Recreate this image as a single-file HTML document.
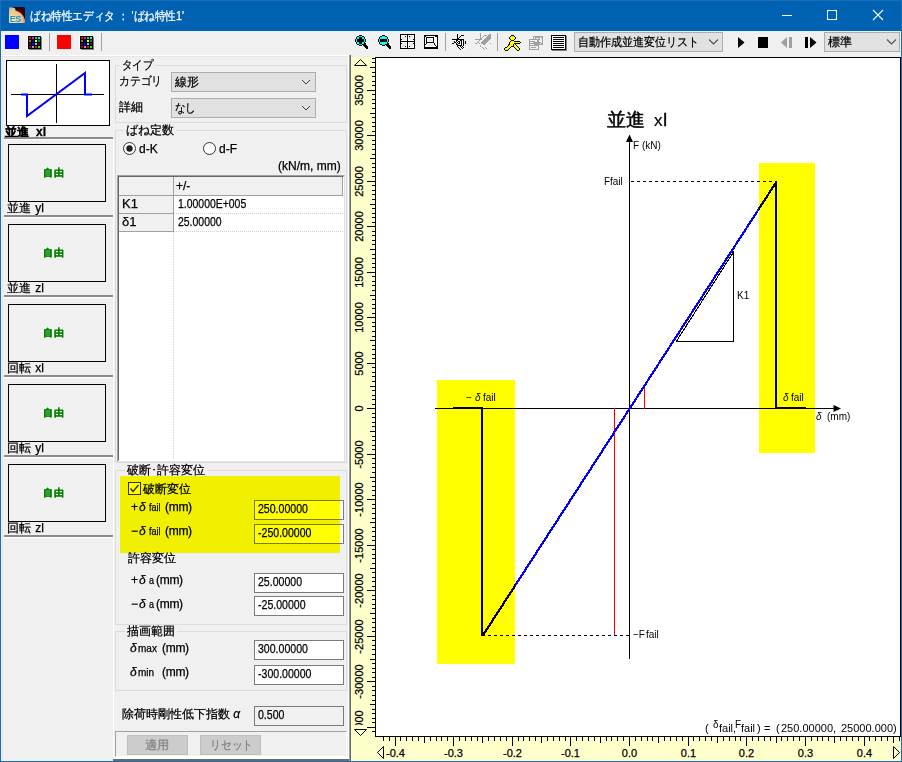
<!DOCTYPE html>
<html lang="ja"><head><meta charset="utf-8"><style>
*{box-sizing:border-box}
html,body{margin:0;padding:0;width:902px;height:762px;overflow:hidden;background:#f0f0f0;font-family:'Liberation Sans', sans-serif;font-size:12px;color:#000}
.ab{position:absolute}
.t{position:absolute;white-space:nowrap;line-height:12px;-webkit-text-stroke:0.25px currentColor}
.gb{position:absolute;border:1px solid #dcdcdc}
.gl{position:absolute;background:#f0f0f0;padding:0 2px;line-height:12px;white-space:nowrap;-webkit-text-stroke:0.25px #000}
.cb{position:absolute;background:#e1e1e1;border:1px solid #adadad}
.in{position:absolute;background:#fff;border:1px solid #7a7a7a;line-height:17px;padding-left:3px;white-space:nowrap;-webkit-text-stroke:0.25px #000}
.thumb{position:absolute;border:1px solid #000;background:#f0f0f0}
.free{position:absolute;left:0;right:0;text-align:center;color:#008000;font-weight:bold;font-size:11px;line-height:11px}
.sep{position:absolute;left:4px;width:109px;height:3px;border-top:2px solid #8a8a8a;border-bottom:1px solid #fff}
</style></head><body>

<div class="ab" style="left:0;top:0;width:902px;height:31px;background:#0062b2"></div>
<div class="ab" style="left:0;top:0;width:902px;height:1px;background:#1b6db6"></div>
<div class="ab" style="left:0;top:0;width:1px;height:762px;background:#1b6db6"></div>
<div class="ab" style="left:901px;top:0;width:1px;height:762px;background:#1b6db6"></div>
<div class="ab" style="left:0;top:761px;width:902px;height:1px;background:#1b6db6"></div>
<svg class="ab" style="left:9px;top:7px" width="16" height="16" viewBox="0 0 16 16"><defs><radialGradient id="pg" cx="0.2" cy="0.9" r="0.9"><stop offset="0" stop-color="#ffe8b8"/><stop offset="0.7" stop-color="#f0c090"/><stop offset="1" stop-color="#c07050"/></radialGradient></defs><rect x="0" y="0" width="16" height="16" rx="1" fill="url(#pg)"/><path d="M2 0 H15 Q16 0 16 1 V13 Q14 6 8 4 Q5 3 2 0 Z" fill="#3a0202"/><ellipse cx="3.5" cy="3" rx="3" ry="2.5" fill="#c8c8c8"/><ellipse cx="4" cy="5" rx="1.5" ry="1" fill="#f0f000"/><text x="0.8" y="14.8" font-family="Liberation Sans" font-size="9" font-weight="bold" fill="#1898c8" letter-spacing="-0.5">ES</text></svg>
<div class="t" style="left:30px;top:10px;color:#fff;font-size:12px;transform:scaleX(0.885);transform-origin:0 0">ばね特性エディタ ： 'ばね特性1'</div>
<div class="ab" style="left:782px;top:15px;width:10px;height:1px;background:#fff"></div>
<div class="ab" style="left:827px;top:10px;width:10px;height:10px;border:1px solid #fff"></div>
<svg class="ab" style="left:872px;top:9px" width="12" height="12"><path d="M1 1L11 11M11 1L1 11" stroke="#fff" stroke-width="1.1"/></svg>
<div class="ab" style="left:5px;top:35px;width:14px;height:14px;background:#0000ff"></div>
<div class="ab" style="left:27px;top:35px;width:15px;height:15px;background:#fafafa"></div><div class="ab" style="left:29px;top:37px;width:13px;height:13px;background:#808080"></div><div class="ab" style="left:28px;top:36px;width:13px;height:13px;background:#000"></div><div class="ab" style="left:29px;top:37px;width:2px;height:2px;background:#ff0000"></div><div class="ab" style="left:32px;top:37px;width:2px;height:2px;background:#ff00ff"></div><div class="ab" style="left:35px;top:37px;width:2px;height:2px;background:#00ff00"></div><div class="ab" style="left:38px;top:37px;width:2px;height:2px;background:#00ffff"></div><div class="ab" style="left:29px;top:40px;width:2px;height:2px;background:#808000"></div><div class="ab" style="left:32px;top:40px;width:2px;height:2px;background:#000080"></div><div class="ab" style="left:35px;top:40px;width:2px;height:2px;background:#ffff00"></div><div class="ab" style="left:38px;top:40px;width:2px;height:2px;background:#008080"></div><div class="ab" style="left:29px;top:43px;width:2px;height:2px;background:#800000"></div><div class="ab" style="left:32px;top:43px;width:2px;height:2px;background:#0000ff"></div><div class="ab" style="left:35px;top:43px;width:2px;height:2px;background:#00ffff"></div><div class="ab" style="left:38px;top:43px;width:2px;height:2px;background:#800000"></div><div class="ab" style="left:29px;top:46px;width:2px;height:2px;background:#800080"></div><div class="ab" style="left:32px;top:46px;width:2px;height:2px;background:#a4a4a4"></div><div class="ab" style="left:35px;top:46px;width:2px;height:2px;background:#ff0000"></div><div class="ab" style="left:38px;top:46px;width:2px;height:2px;background:#00ff00"></div>
<div class="ab" style="left:49px;top:33px;width:1px;height:18px;background:#a0a0a0"></div>
<div class="ab" style="left:57px;top:35px;width:14px;height:14px;background:#ff0000"></div>
<div class="ab" style="left:79px;top:35px;width:15px;height:15px;background:#fafafa"></div><div class="ab" style="left:81px;top:37px;width:13px;height:13px;background:#808080"></div><div class="ab" style="left:80px;top:36px;width:13px;height:13px;background:#000"></div><div class="ab" style="left:81px;top:37px;width:2px;height:2px;background:#ff0000"></div><div class="ab" style="left:84px;top:37px;width:2px;height:2px;background:#ff00ff"></div><div class="ab" style="left:87px;top:37px;width:2px;height:2px;background:#00ff00"></div><div class="ab" style="left:90px;top:37px;width:2px;height:2px;background:#00ffff"></div><div class="ab" style="left:81px;top:40px;width:2px;height:2px;background:#808000"></div><div class="ab" style="left:84px;top:40px;width:2px;height:2px;background:#000080"></div><div class="ab" style="left:87px;top:40px;width:2px;height:2px;background:#ffff00"></div><div class="ab" style="left:90px;top:40px;width:2px;height:2px;background:#008080"></div><div class="ab" style="left:81px;top:43px;width:2px;height:2px;background:#800000"></div><div class="ab" style="left:84px;top:43px;width:2px;height:2px;background:#0000ff"></div><div class="ab" style="left:87px;top:43px;width:2px;height:2px;background:#00ffff"></div><div class="ab" style="left:90px;top:43px;width:2px;height:2px;background:#800000"></div><div class="ab" style="left:81px;top:46px;width:2px;height:2px;background:#800080"></div><div class="ab" style="left:84px;top:46px;width:2px;height:2px;background:#a4a4a4"></div><div class="ab" style="left:87px;top:46px;width:2px;height:2px;background:#ff0000"></div><div class="ab" style="left:90px;top:46px;width:2px;height:2px;background:#00ff00"></div>
<div class="ab" style="left:101px;top:33px;width:1px;height:18px;background:#a0a0a0"></div>
<svg class="ab" style="left:350px;top:31px" width="551" height="24" viewBox="350 31 551 24"><g shape-rendering="crispEdges"><rect x="358" y="34" width="5" height="1" fill="#ffffff"/><rect x="357" y="35" width="2" height="1" fill="#ffffff"/><rect x="359" y="35" width="3" height="1" fill="#000"/><rect x="362" y="35" width="2" height="1" fill="#ffffff"/><rect x="356" y="36" width="1" height="1" fill="#ffffff"/><rect x="357" y="36" width="2" height="1" fill="#000"/><rect x="359" y="36" width="3" height="1" fill="#00ffff"/><rect x="362" y="36" width="2" height="1" fill="#000"/><rect x="364" y="36" width="1" height="1" fill="#ffffff"/><rect x="355" y="37" width="1" height="1" fill="#ffffff"/><rect x="356" y="37" width="1" height="1" fill="#000"/><rect x="357" y="37" width="2" height="1" fill="#00ffff"/><rect x="359" y="37" width="3" height="1" fill="#000"/><rect x="362" y="37" width="2" height="1" fill="#00ffff"/><rect x="364" y="37" width="1" height="1" fill="#000"/><rect x="365" y="37" width="1" height="1" fill="#ffffff"/><rect x="355" y="38" width="1" height="1" fill="#ffffff"/><rect x="356" y="38" width="1" height="1" fill="#000"/><rect x="357" y="38" width="2" height="1" fill="#00ffff"/><rect x="359" y="38" width="3" height="1" fill="#000"/><rect x="362" y="38" width="2" height="1" fill="#00ffff"/><rect x="364" y="38" width="1" height="1" fill="#000"/><rect x="365" y="38" width="1" height="1" fill="#ffffff"/><rect x="355" y="39" width="1" height="1" fill="#000"/><rect x="356" y="39" width="1" height="1" fill="#00ffff"/><rect x="357" y="39" width="7" height="1" fill="#000"/><rect x="364" y="39" width="1" height="1" fill="#00ffff"/><rect x="365" y="39" width="1" height="1" fill="#000"/><rect x="366" y="39" width="1" height="1" fill="#ffffff"/><rect x="355" y="40" width="1" height="1" fill="#000"/><rect x="356" y="40" width="1" height="1" fill="#00ffff"/><rect x="357" y="40" width="7" height="1" fill="#000"/><rect x="364" y="40" width="1" height="1" fill="#00ffff"/><rect x="365" y="40" width="1" height="1" fill="#000"/><rect x="366" y="40" width="1" height="1" fill="#ffffff"/><rect x="355" y="41" width="1" height="1" fill="#000"/><rect x="356" y="41" width="1" height="1" fill="#00ffff"/><rect x="357" y="41" width="7" height="1" fill="#000"/><rect x="364" y="41" width="1" height="1" fill="#00ffff"/><rect x="365" y="41" width="1" height="1" fill="#000"/><rect x="366" y="41" width="1" height="1" fill="#ffffff"/><rect x="355" y="42" width="1" height="1" fill="#ffffff"/><rect x="356" y="42" width="1" height="1" fill="#000"/><rect x="357" y="42" width="2" height="1" fill="#00ffff"/><rect x="359" y="42" width="3" height="1" fill="#000"/><rect x="362" y="42" width="2" height="1" fill="#00ffff"/><rect x="364" y="42" width="1" height="1" fill="#000"/><rect x="365" y="42" width="1" height="1" fill="#ffffff"/><rect x="355" y="43" width="1" height="1" fill="#ffffff"/><rect x="356" y="43" width="1" height="1" fill="#000"/><rect x="357" y="43" width="2" height="1" fill="#00ffff"/><rect x="359" y="43" width="3" height="1" fill="#000"/><rect x="362" y="43" width="2" height="1" fill="#00ffff"/><rect x="364" y="43" width="2" height="1" fill="#000"/><rect x="366" y="43" width="1" height="1" fill="#ffffff"/><rect x="356" y="44" width="1" height="1" fill="#ffffff"/><rect x="357" y="44" width="2" height="1" fill="#000"/><rect x="359" y="44" width="3" height="1" fill="#00ffff"/><rect x="362" y="44" width="4" height="1" fill="#000"/><rect x="366" y="44" width="1" height="1" fill="#ffffff"/><rect x="357" y="45" width="2" height="1" fill="#ffffff"/><rect x="359" y="45" width="3" height="1" fill="#000"/><rect x="362" y="45" width="1" height="1" fill="#ffffff"/><rect x="363" y="45" width="4" height="1" fill="#000"/><rect x="367" y="45" width="1" height="1" fill="#ffffff"/><rect x="359" y="46" width="3" height="1" fill="#ffffff"/><rect x="363" y="46" width="1" height="1" fill="#ffffff"/><rect x="364" y="46" width="4" height="1" fill="#000"/><rect x="364" y="47" width="1" height="1" fill="#ffffff"/><rect x="365" y="47" width="3" height="1" fill="#000"/><rect x="365" y="48" width="1" height="1" fill="#ffffff"/><rect x="366" y="48" width="2" height="1" fill="#000"/><rect x="381" y="34" width="5" height="1" fill="#ffffff"/><rect x="380" y="35" width="2" height="1" fill="#ffffff"/><rect x="382" y="35" width="3" height="1" fill="#000"/><rect x="385" y="35" width="2" height="1" fill="#ffffff"/><rect x="379" y="36" width="1" height="1" fill="#ffffff"/><rect x="380" y="36" width="2" height="1" fill="#000"/><rect x="382" y="36" width="3" height="1" fill="#00ffff"/><rect x="385" y="36" width="2" height="1" fill="#000"/><rect x="387" y="36" width="1" height="1" fill="#ffffff"/><rect x="378" y="37" width="1" height="1" fill="#ffffff"/><rect x="379" y="37" width="1" height="1" fill="#000"/><rect x="380" y="37" width="7" height="1" fill="#00ffff"/><rect x="387" y="37" width="1" height="1" fill="#000"/><rect x="388" y="37" width="1" height="1" fill="#ffffff"/><rect x="378" y="38" width="1" height="1" fill="#ffffff"/><rect x="379" y="38" width="1" height="1" fill="#000"/><rect x="380" y="38" width="7" height="1" fill="#00ffff"/><rect x="387" y="38" width="1" height="1" fill="#000"/><rect x="388" y="38" width="1" height="1" fill="#ffffff"/><rect x="378" y="39" width="1" height="1" fill="#000"/><rect x="379" y="39" width="1" height="1" fill="#00ffff"/><rect x="380" y="39" width="7" height="1" fill="#000"/><rect x="387" y="39" width="1" height="1" fill="#00ffff"/><rect x="388" y="39" width="1" height="1" fill="#000"/><rect x="389" y="39" width="1" height="1" fill="#ffffff"/><rect x="378" y="40" width="1" height="1" fill="#000"/><rect x="379" y="40" width="1" height="1" fill="#00ffff"/><rect x="380" y="40" width="7" height="1" fill="#000"/><rect x="387" y="40" width="1" height="1" fill="#00ffff"/><rect x="388" y="40" width="1" height="1" fill="#000"/><rect x="389" y="40" width="1" height="1" fill="#ffffff"/><rect x="378" y="41" width="1" height="1" fill="#000"/><rect x="379" y="41" width="1" height="1" fill="#00ffff"/><rect x="380" y="41" width="7" height="1" fill="#000"/><rect x="387" y="41" width="1" height="1" fill="#00ffff"/><rect x="388" y="41" width="1" height="1" fill="#000"/><rect x="389" y="41" width="1" height="1" fill="#ffffff"/><rect x="378" y="42" width="1" height="1" fill="#ffffff"/><rect x="379" y="42" width="1" height="1" fill="#000"/><rect x="380" y="42" width="7" height="1" fill="#00ffff"/><rect x="387" y="42" width="1" height="1" fill="#000"/><rect x="388" y="42" width="1" height="1" fill="#ffffff"/><rect x="378" y="43" width="1" height="1" fill="#ffffff"/><rect x="379" y="43" width="1" height="1" fill="#000"/><rect x="380" y="43" width="7" height="1" fill="#00ffff"/><rect x="387" y="43" width="2" height="1" fill="#000"/><rect x="389" y="43" width="1" height="1" fill="#ffffff"/><rect x="379" y="44" width="1" height="1" fill="#ffffff"/><rect x="380" y="44" width="2" height="1" fill="#000"/><rect x="382" y="44" width="3" height="1" fill="#00ffff"/><rect x="385" y="44" width="4" height="1" fill="#000"/><rect x="389" y="44" width="1" height="1" fill="#ffffff"/><rect x="380" y="45" width="2" height="1" fill="#ffffff"/><rect x="382" y="45" width="3" height="1" fill="#000"/><rect x="385" y="45" width="1" height="1" fill="#ffffff"/><rect x="386" y="45" width="4" height="1" fill="#000"/><rect x="390" y="45" width="1" height="1" fill="#ffffff"/><rect x="382" y="46" width="3" height="1" fill="#ffffff"/><rect x="386" y="46" width="1" height="1" fill="#ffffff"/><rect x="387" y="46" width="4" height="1" fill="#000"/><rect x="387" y="47" width="1" height="1" fill="#ffffff"/><rect x="388" y="47" width="3" height="1" fill="#000"/><rect x="388" y="48" width="1" height="1" fill="#ffffff"/><rect x="389" y="48" width="2" height="1" fill="#000"/><rect x="400" y="34" width="15" height="1" fill="#000"/><rect x="400" y="35" width="1" height="1" fill="#000"/><rect x="401" y="35" width="6" height="1" fill="#ffffff"/><rect x="407" y="35" width="1" height="1" fill="#000"/><rect x="408" y="35" width="6" height="1" fill="#ffffff"/><rect x="414" y="35" width="1" height="1" fill="#000"/><rect x="400" y="36" width="1" height="1" fill="#000"/><rect x="401" y="36" width="1" height="1" fill="#ffffff"/><rect x="402" y="36" width="3" height="1" fill="#e8e8e8"/><rect x="405" y="36" width="1" height="1" fill="#000"/><rect x="406" y="36" width="1" height="1" fill="#ffffff"/><rect x="407" y="36" width="1" height="1" fill="#000"/><rect x="408" y="36" width="1" height="1" fill="#ffffff"/><rect x="409" y="36" width="1" height="1" fill="#000"/><rect x="410" y="36" width="3" height="1" fill="#e8e8e8"/><rect x="413" y="36" width="1" height="1" fill="#ffffff"/><rect x="414" y="36" width="1" height="1" fill="#000"/><rect x="400" y="37" width="1" height="1" fill="#000"/><rect x="401" y="37" width="1" height="1" fill="#ffffff"/><rect x="402" y="37" width="4" height="1" fill="#e8e8e8"/><rect x="406" y="37" width="1" height="1" fill="#ffffff"/><rect x="407" y="37" width="1" height="1" fill="#000"/><rect x="408" y="37" width="1" height="1" fill="#ffffff"/><rect x="409" y="37" width="4" height="1" fill="#e8e8e8"/><rect x="413" y="37" width="1" height="1" fill="#ffffff"/><rect x="414" y="37" width="1" height="1" fill="#000"/><rect x="400" y="38" width="1" height="1" fill="#000"/><rect x="401" y="38" width="1" height="1" fill="#ffffff"/><rect x="402" y="38" width="4" height="1" fill="#e8e8e8"/><rect x="406" y="38" width="1" height="1" fill="#ffffff"/><rect x="407" y="38" width="1" height="1" fill="#000"/><rect x="408" y="38" width="1" height="1" fill="#ffffff"/><rect x="409" y="38" width="4" height="1" fill="#e8e8e8"/><rect x="413" y="38" width="1" height="1" fill="#ffffff"/><rect x="414" y="38" width="1" height="1" fill="#000"/><rect x="400" y="39" width="2" height="1" fill="#000"/><rect x="402" y="39" width="4" height="1" fill="#e8e8e8"/><rect x="406" y="39" width="1" height="1" fill="#ffffff"/><rect x="407" y="39" width="1" height="1" fill="#000"/><rect x="408" y="39" width="1" height="1" fill="#ffffff"/><rect x="409" y="39" width="4" height="1" fill="#e8e8e8"/><rect x="413" y="39" width="2" height="1" fill="#000"/><rect x="400" y="40" width="1" height="1" fill="#000"/><rect x="401" y="40" width="6" height="1" fill="#ffffff"/><rect x="407" y="40" width="1" height="1" fill="#000"/><rect x="408" y="40" width="6" height="1" fill="#ffffff"/><rect x="414" y="40" width="1" height="1" fill="#000"/><rect x="400" y="41" width="15" height="1" fill="#000"/><rect x="400" y="42" width="1" height="1" fill="#000"/><rect x="401" y="42" width="6" height="1" fill="#ffffff"/><rect x="407" y="42" width="1" height="1" fill="#000"/><rect x="408" y="42" width="6" height="1" fill="#ffffff"/><rect x="414" y="42" width="1" height="1" fill="#000"/><rect x="400" y="43" width="2" height="1" fill="#000"/><rect x="402" y="43" width="4" height="1" fill="#e8e8e8"/><rect x="406" y="43" width="1" height="1" fill="#ffffff"/><rect x="407" y="43" width="1" height="1" fill="#000"/><rect x="408" y="43" width="1" height="1" fill="#ffffff"/><rect x="409" y="43" width="4" height="1" fill="#e8e8e8"/><rect x="413" y="43" width="2" height="1" fill="#000"/><rect x="400" y="44" width="1" height="1" fill="#000"/><rect x="401" y="44" width="1" height="1" fill="#ffffff"/><rect x="402" y="44" width="4" height="1" fill="#e8e8e8"/><rect x="406" y="44" width="1" height="1" fill="#ffffff"/><rect x="407" y="44" width="1" height="1" fill="#000"/><rect x="408" y="44" width="1" height="1" fill="#ffffff"/><rect x="409" y="44" width="4" height="1" fill="#e8e8e8"/><rect x="413" y="44" width="1" height="1" fill="#ffffff"/><rect x="414" y="44" width="1" height="1" fill="#000"/><rect x="400" y="45" width="1" height="1" fill="#000"/><rect x="401" y="45" width="1" height="1" fill="#ffffff"/><rect x="402" y="45" width="4" height="1" fill="#e8e8e8"/><rect x="406" y="45" width="1" height="1" fill="#ffffff"/><rect x="407" y="45" width="1" height="1" fill="#000"/><rect x="408" y="45" width="1" height="1" fill="#ffffff"/><rect x="409" y="45" width="4" height="1" fill="#e8e8e8"/><rect x="413" y="45" width="1" height="1" fill="#ffffff"/><rect x="414" y="45" width="1" height="1" fill="#000"/><rect x="400" y="46" width="1" height="1" fill="#000"/><rect x="401" y="46" width="1" height="1" fill="#ffffff"/><rect x="402" y="46" width="3" height="1" fill="#e8e8e8"/><rect x="405" y="46" width="1" height="1" fill="#000"/><rect x="406" y="46" width="1" height="1" fill="#ffffff"/><rect x="407" y="46" width="1" height="1" fill="#000"/><rect x="408" y="46" width="1" height="1" fill="#ffffff"/><rect x="409" y="46" width="1" height="1" fill="#000"/><rect x="410" y="46" width="3" height="1" fill="#e8e8e8"/><rect x="413" y="46" width="1" height="1" fill="#ffffff"/><rect x="414" y="46" width="1" height="1" fill="#000"/><rect x="400" y="47" width="1" height="1" fill="#000"/><rect x="401" y="47" width="6" height="1" fill="#ffffff"/><rect x="407" y="47" width="1" height="1" fill="#000"/><rect x="408" y="47" width="6" height="1" fill="#ffffff"/><rect x="414" y="47" width="1" height="1" fill="#000"/><rect x="400" y="48" width="15" height="1" fill="#000"/><rect x="424" y="35" width="14" height="1" fill="#000"/><rect x="424" y="36" width="2" height="1" fill="#000"/><rect x="426" y="36" width="9" height="1" fill="#ffffff"/><rect x="435" y="36" width="3" height="1" fill="#000"/><rect x="424" y="37" width="1" height="1" fill="#000"/><rect x="425" y="37" width="1" height="1" fill="#ffffff"/><rect x="426" y="37" width="8" height="1" fill="#000"/><rect x="434" y="37" width="3" height="1" fill="#ffffff"/><rect x="437" y="37" width="1" height="1" fill="#000"/><rect x="424" y="38" width="1" height="1" fill="#000"/><rect x="425" y="38" width="1" height="1" fill="#ffffff"/><rect x="426" y="38" width="1" height="1" fill="#000"/><rect x="427" y="38" width="6" height="1" fill="#ffffff"/><rect x="433" y="38" width="1" height="1" fill="#000"/><rect x="434" y="38" width="3" height="1" fill="#ffffff"/><rect x="437" y="38" width="1" height="1" fill="#000"/><rect x="424" y="39" width="1" height="1" fill="#000"/><rect x="425" y="39" width="1" height="1" fill="#ffffff"/><rect x="426" y="39" width="1" height="1" fill="#000"/><rect x="427" y="39" width="1" height="1" fill="#ffffff"/><rect x="428" y="39" width="4" height="1" fill="#e8e8e8"/><rect x="432" y="39" width="1" height="1" fill="#ffffff"/><rect x="433" y="39" width="1" height="1" fill="#000"/><rect x="434" y="39" width="3" height="1" fill="#ffffff"/><rect x="437" y="39" width="1" height="1" fill="#000"/><rect x="424" y="40" width="1" height="1" fill="#000"/><rect x="425" y="40" width="1" height="1" fill="#ffffff"/><rect x="426" y="40" width="1" height="1" fill="#000"/><rect x="427" y="40" width="1" height="1" fill="#ffffff"/><rect x="428" y="40" width="4" height="1" fill="#e8e8e8"/><rect x="432" y="40" width="1" height="1" fill="#ffffff"/><rect x="433" y="40" width="1" height="1" fill="#000"/><rect x="434" y="40" width="3" height="1" fill="#ffffff"/><rect x="437" y="40" width="1" height="1" fill="#000"/><rect x="424" y="41" width="1" height="1" fill="#000"/><rect x="425" y="41" width="1" height="1" fill="#ffffff"/><rect x="426" y="41" width="1" height="1" fill="#000"/><rect x="427" y="41" width="6" height="1" fill="#ffffff"/><rect x="433" y="41" width="1" height="1" fill="#000"/><rect x="434" y="41" width="3" height="1" fill="#ffffff"/><rect x="437" y="41" width="1" height="1" fill="#000"/><rect x="424" y="42" width="1" height="1" fill="#000"/><rect x="425" y="42" width="1" height="1" fill="#ffffff"/><rect x="426" y="42" width="8" height="1" fill="#000"/><rect x="434" y="42" width="3" height="1" fill="#ffffff"/><rect x="437" y="42" width="1" height="1" fill="#000"/><rect x="424" y="43" width="1" height="1" fill="#000"/><rect x="425" y="43" width="1" height="1" fill="#ffffff"/><rect x="426" y="43" width="1" height="1" fill="#000"/><rect x="427" y="43" width="7" height="1" fill="#ffffff"/><rect x="434" y="43" width="1" height="1" fill="#000"/><rect x="435" y="43" width="2" height="1" fill="#ffffff"/><rect x="437" y="43" width="1" height="1" fill="#000"/><rect x="424" y="44" width="2" height="1" fill="#000"/><rect x="426" y="44" width="1" height="1" fill="#ffffff"/><rect x="427" y="44" width="6" height="1" fill="#e8e8e8"/><rect x="433" y="44" width="1" height="1" fill="#ffffff"/><rect x="434" y="44" width="1" height="1" fill="#000"/><rect x="435" y="44" width="2" height="1" fill="#ffffff"/><rect x="437" y="44" width="1" height="1" fill="#000"/><rect x="424" y="45" width="1" height="1" fill="#000"/><rect x="425" y="45" width="2" height="1" fill="#ffffff"/><rect x="427" y="45" width="6" height="1" fill="#e8e8e8"/><rect x="433" y="45" width="2" height="1" fill="#ffffff"/><rect x="435" y="45" width="1" height="1" fill="#000"/><rect x="436" y="45" width="1" height="1" fill="#ffffff"/><rect x="437" y="45" width="1" height="1" fill="#000"/><rect x="424" y="46" width="1" height="1" fill="#000"/><rect x="425" y="46" width="11" height="1" fill="#ffffff"/><rect x="436" y="46" width="2" height="1" fill="#000"/><rect x="424" y="47" width="14" height="1" fill="#000"/><rect x="424" y="48" width="14" height="1" fill="#000"/><rect x="457" y="33" width="1" height="1" fill="#ffffff"/><rect x="457" y="34" width="1" height="1" fill="#000"/><rect x="457" y="35" width="1" height="1" fill="#000"/><rect x="461" y="35" width="3" height="1" fill="#000"/><rect x="457" y="36" width="1" height="1" fill="#000"/><rect x="460" y="36" width="1" height="1" fill="#000"/><rect x="457" y="37" width="1" height="1" fill="#000"/><rect x="459" y="37" width="1" height="1" fill="#000"/><rect x="457" y="38" width="2" height="1" fill="#000"/><rect x="452" y="39" width="12" height="1" fill="#000"/><rect x="456" y="40" width="2" height="1" fill="#000"/><rect x="460" y="40" width="2" height="1" fill="#000"/><rect x="462" y="40" width="1" height="1" fill="#e8e8e8"/><rect x="463" y="40" width="1" height="1" fill="#000"/><rect x="464" y="40" width="1" height="1" fill="#e8e8e8"/><rect x="454" y="41" width="1" height="1" fill="#000"/><rect x="456" y="41" width="1" height="1" fill="#000"/><rect x="458" y="41" width="2" height="1" fill="#000"/><rect x="460" y="41" width="1" height="1" fill="#e8e8e8"/><rect x="461" y="41" width="1" height="1" fill="#000"/><rect x="462" y="41" width="1" height="1" fill="#e8e8e8"/><rect x="463" y="41" width="1" height="1" fill="#000"/><rect x="464" y="41" width="1" height="1" fill="#e8e8e8"/><rect x="465" y="41" width="1" height="1" fill="#000"/><rect x="454" y="42" width="2" height="1" fill="#000"/><rect x="457" y="42" width="1" height="1" fill="#000"/><rect x="458" y="42" width="1" height="1" fill="#e8e8e8"/><rect x="459" y="42" width="1" height="1" fill="#000"/><rect x="460" y="42" width="1" height="1" fill="#e8e8e8"/><rect x="461" y="42" width="1" height="1" fill="#000"/><rect x="462" y="42" width="1" height="1" fill="#e8e8e8"/><rect x="463" y="42" width="1" height="1" fill="#000"/><rect x="464" y="42" width="1" height="1" fill="#e8e8e8"/><rect x="465" y="42" width="1" height="1" fill="#000"/><rect x="466" y="42" width="1" height="1" fill="#e8e8e8"/><rect x="452" y="43" width="2" height="1" fill="#000"/><rect x="456" y="43" width="1" height="1" fill="#000"/><rect x="458" y="43" width="2" height="1" fill="#000"/><rect x="460" y="43" width="1" height="1" fill="#e8e8e8"/><rect x="461" y="43" width="1" height="1" fill="#000"/><rect x="462" y="43" width="1" height="1" fill="#e8e8e8"/><rect x="463" y="43" width="1" height="1" fill="#000"/><rect x="464" y="43" width="1" height="1" fill="#e8e8e8"/><rect x="465" y="43" width="1" height="1" fill="#000"/><rect x="456" y="44" width="2" height="1" fill="#000"/><rect x="460" y="44" width="1" height="1" fill="#e8e8e8"/><rect x="461" y="44" width="1" height="1" fill="#000"/><rect x="462" y="44" width="1" height="1" fill="#e8e8e8"/><rect x="463" y="44" width="1" height="1" fill="#000"/><rect x="464" y="44" width="1" height="1" fill="#e8e8e8"/><rect x="457" y="45" width="5" height="1" fill="#000"/><rect x="462" y="45" width="1" height="1" fill="#e8e8e8"/><rect x="463" y="45" width="1" height="1" fill="#000"/><rect x="457" y="46" width="1" height="1" fill="#000"/><rect x="460" y="46" width="1" height="1" fill="#000"/><rect x="462" y="46" width="1" height="1" fill="#000"/><rect x="458" y="47" width="1" height="1" fill="#000"/><rect x="461" y="47" width="1" height="1" fill="#000"/><rect x="463" y="47" width="1" height="1" fill="#000"/><rect x="459" y="48" width="1" height="1" fill="#000"/><rect x="462" y="48" width="1" height="1" fill="#000"/><rect x="463" y="48" width="2" height="1" fill="#ffffff"/><rect x="460" y="49" width="1" height="1" fill="#000"/><rect x="463" y="49" width="2" height="1" fill="#ffffff"/><rect x="480" y="33" width="1" height="1" fill="#a0a0a0"/><rect x="480" y="34" width="1" height="1" fill="#a0a0a0"/><rect x="489" y="34" width="2" height="1" fill="#a0a0a0"/><rect x="480" y="35" width="1" height="1" fill="#a0a0a0"/><rect x="484" y="35" width="3" height="1" fill="#a0a0a0"/><rect x="488" y="35" width="3" height="1" fill="#a0a0a0"/><rect x="480" y="36" width="1" height="1" fill="#a0a0a0"/><rect x="483" y="36" width="1" height="1" fill="#a0a0a0"/><rect x="487" y="36" width="4" height="1" fill="#a0a0a0"/><rect x="480" y="37" width="1" height="1" fill="#a0a0a0"/><rect x="482" y="37" width="1" height="1" fill="#a0a0a0"/><rect x="486" y="37" width="5" height="1" fill="#a0a0a0"/><rect x="480" y="38" width="2" height="1" fill="#a0a0a0"/><rect x="485" y="38" width="6" height="1" fill="#a0a0a0"/><rect x="475" y="39" width="7" height="1" fill="#a0a0a0"/><rect x="484" y="39" width="6" height="1" fill="#a0a0a0"/><rect x="479" y="40" width="1" height="1" fill="#a0a0a0"/><rect x="483" y="40" width="6" height="1" fill="#a0a0a0"/><rect x="478" y="41" width="1" height="1" fill="#a0a0a0"/><rect x="482" y="41" width="6" height="1" fill="#a0a0a0"/><rect x="477" y="42" width="2" height="1" fill="#a0a0a0"/><rect x="481" y="42" width="6" height="1" fill="#a0a0a0"/><rect x="475" y="43" width="2" height="1" fill="#a0a0a0"/><rect x="479" y="43" width="1" height="1" fill="#a0a0a0"/><rect x="481" y="43" width="5" height="1" fill="#a0a0a0"/><rect x="490" y="43" width="1" height="1" fill="#a0a0a0"/><rect x="483" y="44" width="2" height="1" fill="#a0a0a0"/><rect x="480" y="45" width="1" height="1" fill="#a0a0a0"/><rect x="480" y="46" width="1" height="1" fill="#a0a0a0"/><rect x="482" y="47" width="1" height="1" fill="#a0a0a0"/><rect x="485" y="47" width="1" height="1" fill="#a0a0a0"/><rect x="483" y="48" width="1" height="1" fill="#a0a0a0"/><rect x="486" y="48" width="1" height="1" fill="#a0a0a0"/><rect x="484" y="49" width="1" height="1" fill="#a0a0a0"/><rect x="511" y="35" width="3" height="1" fill="#000"/><rect x="510" y="36" width="1" height="1" fill="#000"/><rect x="511" y="36" width="3" height="1" fill="#ffff00"/><rect x="514" y="36" width="1" height="1" fill="#000"/><rect x="509" y="37" width="1" height="1" fill="#000"/><rect x="510" y="37" width="5" height="1" fill="#ffff00"/><rect x="515" y="37" width="1" height="1" fill="#000"/><rect x="509" y="38" width="1" height="1" fill="#000"/><rect x="510" y="38" width="5" height="1" fill="#ffff00"/><rect x="515" y="38" width="1" height="1" fill="#000"/><rect x="510" y="39" width="1" height="1" fill="#000"/><rect x="511" y="39" width="3" height="1" fill="#ffff00"/><rect x="514" y="39" width="1" height="1" fill="#000"/><rect x="511" y="40" width="3" height="1" fill="#000"/><rect x="510" y="41" width="1" height="1" fill="#000"/><rect x="511" y="41" width="3" height="1" fill="#ffff00"/><rect x="514" y="41" width="6" height="1" fill="#000"/><rect x="509" y="42" width="1" height="1" fill="#000"/><rect x="510" y="42" width="10" height="1" fill="#ffff00"/><rect x="520" y="42" width="1" height="1" fill="#000"/><rect x="509" y="43" width="1" height="1" fill="#000"/><rect x="510" y="43" width="4" height="1" fill="#ffff00"/><rect x="514" y="43" width="6" height="1" fill="#000"/><rect x="508" y="44" width="1" height="1" fill="#c00000"/><rect x="509" y="44" width="1" height="1" fill="#000"/><rect x="510" y="44" width="3" height="1" fill="#ffff00"/><rect x="513" y="44" width="1" height="1" fill="#000"/><rect x="514" y="44" width="1" height="1" fill="#ffff00"/><rect x="515" y="44" width="1" height="1" fill="#000"/><rect x="508" y="45" width="1" height="1" fill="#000"/><rect x="509" y="45" width="4" height="1" fill="#ffff00"/><rect x="513" y="45" width="1" height="1" fill="#000"/><rect x="514" y="45" width="2" height="1" fill="#ffff00"/><rect x="516" y="45" width="1" height="1" fill="#000"/><rect x="507" y="46" width="1" height="1" fill="#000"/><rect x="508" y="46" width="3" height="1" fill="#ffff00"/><rect x="511" y="46" width="3" height="1" fill="#000"/><rect x="514" y="46" width="3" height="1" fill="#ffff00"/><rect x="517" y="46" width="1" height="1" fill="#000"/><rect x="505" y="47" width="2" height="1" fill="#000"/><rect x="507" y="47" width="3" height="1" fill="#ffff00"/><rect x="510" y="47" width="1" height="1" fill="#000"/><rect x="514" y="47" width="1" height="1" fill="#000"/><rect x="515" y="47" width="3" height="1" fill="#ffff00"/><rect x="518" y="47" width="1" height="1" fill="#000"/><rect x="504" y="48" width="1" height="1" fill="#000"/><rect x="505" y="48" width="4" height="1" fill="#ffff00"/><rect x="509" y="48" width="1" height="1" fill="#000"/><rect x="515" y="48" width="1" height="1" fill="#000"/><rect x="516" y="48" width="3" height="1" fill="#ffff00"/><rect x="519" y="48" width="1" height="1" fill="#000"/><rect x="504" y="49" width="1" height="1" fill="#000"/><rect x="505" y="49" width="3" height="1" fill="#ffff00"/><rect x="508" y="49" width="1" height="1" fill="#000"/><rect x="516" y="49" width="1" height="1" fill="#000"/><rect x="517" y="49" width="2" height="1" fill="#ffff00"/><rect x="519" y="49" width="1" height="1" fill="#000"/><rect x="505" y="50" width="3" height="1" fill="#000"/><rect x="517" y="50" width="2" height="1" fill="#000"/><rect x="533" y="36" width="10" height="1" fill="#a0a0a0"/><rect x="533" y="37" width="1" height="1" fill="#a0a0a0"/><rect x="535" y="37" width="5" height="1" fill="#a0a0a0"/><rect x="541" y="37" width="2" height="1" fill="#a0a0a0"/><rect x="533" y="38" width="1" height="1" fill="#a0a0a0"/><rect x="535" y="38" width="1" height="1" fill="#a0a0a0"/><rect x="539" y="38" width="1" height="1" fill="#a0a0a0"/><rect x="542" y="38" width="1" height="1" fill="#a0a0a0"/><rect x="529" y="39" width="11" height="1" fill="#a0a0a0"/><rect x="542" y="39" width="1" height="1" fill="#a0a0a0"/><rect x="529" y="40" width="1" height="1" fill="#a0a0a0"/><rect x="537" y="40" width="2" height="1" fill="#a0a0a0"/><rect x="542" y="40" width="1" height="1" fill="#a0a0a0"/><rect x="529" y="41" width="6" height="1" fill="#a0a0a0"/><rect x="537" y="41" width="2" height="1" fill="#a0a0a0"/><rect x="542" y="41" width="1" height="1" fill="#a0a0a0"/><rect x="529" y="42" width="1" height="1" fill="#a0a0a0"/><rect x="533" y="42" width="8" height="1" fill="#a0a0a0"/><rect x="542" y="42" width="1" height="1" fill="#a0a0a0"/><rect x="529" y="43" width="11" height="1" fill="#a0a0a0"/><rect x="541" y="43" width="2" height="1" fill="#a0a0a0"/><rect x="529" y="44" width="1" height="1" fill="#a0a0a0"/><rect x="534" y="44" width="9" height="1" fill="#a0a0a0"/><rect x="529" y="45" width="10" height="1" fill="#a0a0a0"/><rect x="529" y="46" width="1" height="1" fill="#a0a0a0"/><rect x="538" y="46" width="1" height="1" fill="#a0a0a0"/><rect x="529" y="47" width="1" height="1" fill="#a0a0a0"/><rect x="531" y="47" width="5" height="1" fill="#a0a0a0"/><rect x="538" y="47" width="1" height="1" fill="#a0a0a0"/><rect x="529" y="48" width="1" height="1" fill="#a0a0a0"/><rect x="538" y="48" width="1" height="1" fill="#a0a0a0"/><rect x="529" y="49" width="10" height="1" fill="#a0a0a0"/><rect x="551" y="35" width="15" height="1" fill="#000"/><rect x="551" y="36" width="1" height="1" fill="#000"/><rect x="552" y="36" width="13" height="1" fill="#ffffff"/><rect x="565" y="36" width="1" height="1" fill="#000"/><rect x="566" y="36" width="1" height="1" fill="#808080"/><rect x="551" y="37" width="1" height="1" fill="#000"/><rect x="552" y="37" width="1" height="1" fill="#ffffff"/><rect x="553" y="37" width="11" height="1" fill="#000"/><rect x="564" y="37" width="1" height="1" fill="#ffffff"/><rect x="565" y="37" width="1" height="1" fill="#000"/><rect x="566" y="37" width="1" height="1" fill="#808080"/><rect x="551" y="38" width="1" height="1" fill="#000"/><rect x="552" y="38" width="13" height="1" fill="#ffffff"/><rect x="565" y="38" width="1" height="1" fill="#000"/><rect x="566" y="38" width="1" height="1" fill="#808080"/><rect x="551" y="39" width="1" height="1" fill="#000"/><rect x="552" y="39" width="1" height="1" fill="#ffffff"/><rect x="553" y="39" width="11" height="1" fill="#000"/><rect x="564" y="39" width="1" height="1" fill="#ffffff"/><rect x="565" y="39" width="1" height="1" fill="#000"/><rect x="566" y="39" width="1" height="1" fill="#808080"/><rect x="551" y="40" width="1" height="1" fill="#000"/><rect x="552" y="40" width="13" height="1" fill="#ffffff"/><rect x="565" y="40" width="1" height="1" fill="#000"/><rect x="566" y="40" width="1" height="1" fill="#808080"/><rect x="551" y="41" width="1" height="1" fill="#000"/><rect x="552" y="41" width="1" height="1" fill="#ffffff"/><rect x="553" y="41" width="11" height="1" fill="#000"/><rect x="564" y="41" width="1" height="1" fill="#ffffff"/><rect x="565" y="41" width="1" height="1" fill="#000"/><rect x="566" y="41" width="1" height="1" fill="#808080"/><rect x="551" y="42" width="1" height="1" fill="#000"/><rect x="552" y="42" width="13" height="1" fill="#ffffff"/><rect x="565" y="42" width="1" height="1" fill="#000"/><rect x="566" y="42" width="1" height="1" fill="#808080"/><rect x="551" y="43" width="1" height="1" fill="#000"/><rect x="552" y="43" width="1" height="1" fill="#ffffff"/><rect x="553" y="43" width="11" height="1" fill="#000"/><rect x="564" y="43" width="1" height="1" fill="#ffffff"/><rect x="565" y="43" width="1" height="1" fill="#000"/><rect x="566" y="43" width="1" height="1" fill="#808080"/><rect x="551" y="44" width="1" height="1" fill="#000"/><rect x="552" y="44" width="13" height="1" fill="#ffffff"/><rect x="565" y="44" width="1" height="1" fill="#000"/><rect x="566" y="44" width="1" height="1" fill="#808080"/><rect x="551" y="45" width="1" height="1" fill="#000"/><rect x="552" y="45" width="1" height="1" fill="#ffffff"/><rect x="553" y="45" width="11" height="1" fill="#000"/><rect x="564" y="45" width="1" height="1" fill="#ffffff"/><rect x="565" y="45" width="1" height="1" fill="#000"/><rect x="566" y="45" width="1" height="1" fill="#808080"/><rect x="551" y="46" width="1" height="1" fill="#000"/><rect x="552" y="46" width="13" height="1" fill="#ffffff"/><rect x="565" y="46" width="1" height="1" fill="#000"/><rect x="566" y="46" width="1" height="1" fill="#808080"/><rect x="551" y="47" width="1" height="1" fill="#000"/><rect x="552" y="47" width="1" height="1" fill="#ffffff"/><rect x="553" y="47" width="11" height="1" fill="#000"/><rect x="564" y="47" width="1" height="1" fill="#ffffff"/><rect x="565" y="47" width="1" height="1" fill="#000"/><rect x="566" y="47" width="1" height="1" fill="#808080"/><rect x="551" y="48" width="1" height="1" fill="#000"/><rect x="552" y="48" width="13" height="1" fill="#ffffff"/><rect x="565" y="48" width="1" height="1" fill="#000"/><rect x="566" y="48" width="1" height="1" fill="#808080"/><rect x="551" y="49" width="15" height="1" fill="#000"/><rect x="566" y="49" width="1" height="1" fill="#808080"/><rect x="552" y="50" width="15" height="1" fill="#808080"/></g><rect x="445" y="33" width="1" height="18" fill="#a0a0a0"/><rect x="497" y="33" width="1" height="18" fill="#a0a0a0"/><rect x="574" y="32" width="149" height="20" fill="#adadad"/><rect x="575" y="33" width="147" height="18" fill="#e1e1e1"/><polyline points="709,39.5 713.5,44 718,39.5" fill="none" stroke="#505050" stroke-width="1.1"/><path d="M738 37 L744.5 42.5 L738 48 Z" fill="#000"/><rect x="758" y="37" width="10" height="11" fill="#000"/><path d="M787 37 L781 42.5 L787 48 Z" fill="#a0a0a0"/><rect x="789" y="37" width="3" height="11" fill="#a0a0a0"/><rect x="805" y="37" width="3" height="11" fill="#000"/><path d="M810 37 L816.5 42.5 L810 48 Z" fill="#000"/><rect x="824" y="32" width="76" height="20" fill="#adadad"/><rect x="825" y="33" width="74" height="18" fill="#e1e1e1"/><polyline points="887,39.5 891.5,44 896,39.5" fill="none" stroke="#505050" stroke-width="1.1"/></svg>
<div class="t" style="left:578px;top:36px;transform:scaleX(0.92);transform-origin:0 0">自動作成並進変位リスト</div>
<div class="t" style="left:828px;top:36px">標準</div>
<div class="ab" style="left:1px;top:55px;width:350px;height:1px;background:#ffffff"></div>
<div class="ab" style="left:2px;top:56px;width:348px;height:1px;background:#e6e6e6"></div>
<div class="ab" style="left:2px;top:56px;width:1px;height:703px;background:#e6e6e6"></div>
<div class="ab" style="left:113px;top:759px;width:238px;height:2px;background:#6a6a6a"></div>
<div class="ab" style="left:113px;top:757px;width:236px;height:2px;background:#ffffff"></div>
<div class="ab" style="left:113px;top:140px;width:1px;height:617px;background:#ffffff"></div>
<svg class="ab" style="left:6px;top:60px" width="105" height="67"><rect x="0.5" y="0.5" width="103" height="65" fill="#fff" stroke="#000"/><line x1="5" y1="34.5" x2="98" y2="34.5" stroke="#000"/><line x1="50.5" y1="4" x2="50.5" y2="63" stroke="#000"/><polyline points="15,34.5 21,34.5 21,56 79,13 79,34.5 86,34.5" fill="none" stroke="#0000ff" stroke-width="2"/></svg>
<div class="t" style="left:5px;top:125.5px;font-weight:bold;font-size:12px;-webkit-text-stroke:0.3px #000">並進</div>
<div class="t" style="left:36px;top:126px;font-weight:bold;font-size:12px;-webkit-text-stroke:0.3px #000">xl</div>
<div class="sep" style="top:137px"></div>
<div class="thumb" style="left:8px;top:144px;width:98px;height:58px"></div>
<div class="t" style="left:43px;top:167px;color:#008000;font-weight:bold;font-size:10px;line-height:11px;letter-spacing:1px;-webkit-text-stroke:0.2px #008000">自由</div>
<div class="t" style="left:7px;top:202px;word-spacing:1px">並進 yl</div>
<div class="sep" style="top:215px"></div>
<div class="thumb" style="left:8px;top:224px;width:98px;height:58px"></div>
<div class="t" style="left:43px;top:247px;color:#008000;font-weight:bold;font-size:10px;line-height:11px;letter-spacing:1px;-webkit-text-stroke:0.2px #008000">自由</div>
<div class="t" style="left:7px;top:282px;word-spacing:1px">並進 zl</div>
<div class="sep" style="top:295px"></div>
<div class="thumb" style="left:8px;top:304px;width:98px;height:58px"></div>
<div class="t" style="left:43px;top:327px;color:#008000;font-weight:bold;font-size:10px;line-height:11px;letter-spacing:1px;-webkit-text-stroke:0.2px #008000">自由</div>
<div class="t" style="left:7px;top:362px;word-spacing:1px">回転 xl</div>
<div class="sep" style="top:375px"></div>
<div class="thumb" style="left:8px;top:384px;width:98px;height:58px"></div>
<div class="t" style="left:43px;top:407px;color:#008000;font-weight:bold;font-size:10px;line-height:11px;letter-spacing:1px;-webkit-text-stroke:0.2px #008000">自由</div>
<div class="t" style="left:7px;top:442px;word-spacing:1px">回転 yl</div>
<div class="sep" style="top:455px"></div>
<div class="thumb" style="left:8px;top:464px;width:98px;height:58px"></div>
<div class="t" style="left:43px;top:487px;color:#008000;font-weight:bold;font-size:10px;line-height:11px;letter-spacing:1px;-webkit-text-stroke:0.2px #008000">自由</div>
<div class="t" style="left:7px;top:522px;word-spacing:1px">回転 zl</div>
<div class="sep" style="top:535px"></div>
<div class="gb" style="left:115px;top:65px;width:232px;height:58px"></div>
<div class="gl" style="left:120px;top:59px;transform:scaleX(0.87);transform-origin:0 0">タイプ</div>
<div class="t" style="left:119px;top:75px;transform:scaleX(0.9);transform-origin:0 0">カテゴリ</div>
<div class="t" style="left:119px;top:101px">詳細</div>
<div class="cb" style="left:171px;top:72px;width:145px;height:20px"></div><div class="t" style="left:175px;top:76px;transform:scaleX(1);transform-origin:0 0">線形</div><svg class="ab" style="left:301px;top:79px" width="11" height="7"><polyline points="1,1 5,5 9,1" fill="none" stroke="#404040" stroke-width="1"/></svg>
<div class="cb" style="left:171px;top:98px;width:145px;height:20px"></div><div class="t" style="left:175px;top:102px;transform:scaleX(0.87);transform-origin:0 0">なし</div><svg class="ab" style="left:301px;top:105px" width="11" height="7"><polyline points="1,1 5,5 9,1" fill="none" stroke="#404040" stroke-width="1"/></svg>
<div class="gb" style="left:115px;top:130px;width:232px;height:333px"></div>
<div class="gl" style="left:124px;top:124px">ばね定数</div>
<svg class="ab" style="left:123px;top:142px" width="14" height="14"><circle cx="6.5" cy="6.5" r="6" fill="#fff" stroke="#333"/><circle cx="6.5" cy="6.5" r="3.2" fill="#222"/></svg>
<div class="t" style="left:139px;top:143px">d-K</div>
<svg class="ab" style="left:203px;top:142px" width="14" height="14"><circle cx="6.5" cy="6.5" r="6" fill="#fff" stroke="#333"/></svg>
<div class="t" style="left:219px;top:143px">d-F</div>
<div class="t" style="left:278px;top:160px">(kN/m, mm)</div>
<div class="ab" style="left:117px;top:175px;width:228px;height:287px;background:#fff;border-left:1px solid #a0a0a0;border-top:1px solid #a0a0a0;border-right:1px solid #e3e3e3;border-bottom:1px solid #e3e3e3"><div style="position:absolute;left:0;top:0;right:0;bottom:0;border-left:1px solid #696969;border-top:1px solid #696969;border-right:1px solid #fff;border-bottom:1px solid #fff"></div></div>
<div class="ab" style="left:342px;top:177px;width:1px;height:19px;background:#a0a0a0"></div>
<div class="ab" style="left:119px;top:177px;width:223px;height:19px;background:#f0f0f0;border-bottom:1px solid #a0a0a0"></div>
<div class="ab" style="left:119px;top:196px;width:55px;height:36px;background:#f0f0f0"></div>
<div class="ab" style="left:173px;top:177px;width:1px;height:55px;background:#a0a0a0"></div>
<div class="ab" style="left:119px;top:213px;width:55px;height:1px;background:#a0a0a0"></div>
<div class="ab" style="left:119px;top:231px;width:55px;height:1px;background:#a0a0a0"></div>
<div class="ab" style="left:174px;top:213px;width:169px;height:0;border-top:1px dotted #d0d0d0"></div>
<div class="ab" style="left:174px;top:231px;width:169px;height:0;border-top:1px dotted #d0d0d0"></div>
<div class="ab" style="left:173px;top:232px;width:0;height:227px;border-left:1px dotted #d0d0d0"></div>
<div class="t" style="left:176px;top:180px">+/-</div>
<div class="t" style="left:122px;top:198px;font-size:13px">K1</div>
<div class="t" style="left:122px;top:216px;font-size:13px">δ1</div>
<div class="t" style="left:178px;top:198px;transform:scaleX(0.87);transform-origin:0 0">1.00000E+005</div>
<div class="t" style="left:178px;top:216px;transform:scaleX(0.87);transform-origin:0 0">25.00000</div>
<div class="gb" style="left:115px;top:470px;width:232px;height:155px"></div>
<div class="gl" style="left:125px;top:464px">破断･許容変位</div>
<svg class="ab" style="left:128px;top:482px" width="13" height="13"><rect x="0.5" y="0.5" width="12" height="12" fill="#fff" stroke="#333"/><polyline points="2.5,6.5 5,9.5 10.5,3" fill="none" stroke="#222" stroke-width="1.3"/></svg>
<div class="t" style="left:143px;top:483px">破断変位</div>
<div class="t" style="left:131px;top:501px">+</div><div class="t" style="left:139px;top:501px;font-style:italic">δ</div><div class="t" style="left:149px;top:502px;font-size:10px;transform:scaleX(0.9);transform-origin:0 0">fail</div><div class="t" style="left:165px;top:501px;letter-spacing:-0.3px">(mm)</div>
<div class="in" style="left:254px;top:500px;width:90px;height:20px;background:#fff"><span style="display:inline-block;transform:scaleX(0.88);transform-origin:0 0">250.00000</span></div>
<div class="t" style="left:131px;top:525px">−</div><div class="t" style="left:139px;top:525px;font-style:italic">δ</div><div class="t" style="left:149px;top:526px;font-size:10px;transform:scaleX(0.9);transform-origin:0 0">fail</div><div class="t" style="left:165px;top:525px;letter-spacing:-0.3px">(mm)</div>
<div class="in" style="left:254px;top:524px;width:90px;height:20px;background:#fff"><span style="display:inline-block;transform:scaleX(0.88);transform-origin:0 0">-250.00000</span></div>
<div class="t" style="left:128px;top:552px">許容変位</div>
<div class="t" style="left:131px;top:574px">+</div><div class="t" style="left:139px;top:574px;font-style:italic">δ</div><div class="t" style="left:149px;top:575px;font-size:10px;transform:scaleX(0.9);transform-origin:0 0">a</div><div class="t" style="left:156px;top:574px;letter-spacing:-0.3px">(mm)</div>
<div class="in" style="left:254px;top:573px;width:90px;height:20px;background:#fff"><span style="display:inline-block;transform:scaleX(0.88);transform-origin:0 0">25.00000</span></div>
<div class="t" style="left:131px;top:598px">−</div><div class="t" style="left:139px;top:598px;font-style:italic">δ</div><div class="t" style="left:149px;top:599px;font-size:10px;transform:scaleX(0.9);transform-origin:0 0">a</div><div class="t" style="left:156px;top:598px;letter-spacing:-0.3px">(mm)</div>
<div class="in" style="left:254px;top:596px;width:90px;height:20px;background:#fff"><span style="display:inline-block;transform:scaleX(0.88);transform-origin:0 0">-25.00000</span></div>
<div class="ab" style="left:120px;top:476px;width:220px;height:77px;background:#f0f000;mix-blend-mode:multiply;background:#ffff00"></div>
<div class="gb" style="left:115px;top:631px;width:232px;height:60px"></div>
<div class="gl" style="left:125px;top:625px">描画範囲</div>
<div class="t" style="left:130px;top:642px;font-style:italic">δ</div><div class="t" style="left:138px;top:643px;font-size:10px">max</div><div class="t" style="left:162px;top:642px;letter-spacing:-0.3px">(mm)</div>
<div class="in" style="left:254px;top:640px;width:90px;height:20px;background:#fff"><span style="display:inline-block;transform:scaleX(0.88);transform-origin:0 0">300.00000</span></div>
<div class="t" style="left:130px;top:666px;font-style:italic">δ</div><div class="t" style="left:138px;top:667px;font-size:10px">min</div><div class="t" style="left:162px;top:666px;letter-spacing:-0.3px">(mm)</div>
<div class="in" style="left:254px;top:665px;width:90px;height:20px;background:#fff"><span style="display:inline-block;transform:scaleX(0.88);transform-origin:0 0">-300.00000</span></div>
<div class="t" style="left:122px;top:708px">除荷時剛性低下指数 <i>α</i></div>
<div class="in" style="left:254px;top:706px;width:90px;height:20px;background:#f0f0f0"><span style="display:inline-block;transform:scaleX(0.88);transform-origin:0 0">0.500</span></div>
<div class="ab" style="left:115px;top:731px;width:232px;height:26px;border-top:1px solid #a0a0a0;border-left:1px solid #a0a0a0;border-right:1px solid #fff;border-bottom:1px solid #fff"></div>
<div class="ab" style="left:127px;top:735px;width:61px;height:20px;background:#cccccc;border:1px solid #bfbfbf"></div>
<div class="t" style="left:145px;top:739px;color:#838383">適用</div>
<div class="ab" style="left:200px;top:735px;width:61px;height:20px;background:#cccccc;border:1px solid #bfbfbf"></div>
<div class="t" style="left:210px;top:739px;color:#838383;transform:scaleX(0.9);transform-origin:0 0">リセット</div>
<div class="ab" style="left:348px;top:56px;width:1px;height:703px;background:#ffffff"></div>
<div class="ab" style="left:349px;top:55px;width:1px;height:706px;background:#a0a0a0"></div>
<div class="ab" style="left:350px;top:55px;width:1px;height:706px;background:#696969"></div>
<svg class="ab" style="left:351px;top:56px" width="550" height="705" viewBox="351 56 550 705" shape-rendering="crispEdges"><defs><clipPath id="lc"><rect x="351" y="67" width="24" height="658"/></clipPath></defs><rect x="351" y="56" width="550" height="705" fill="#ffffcc"/><rect x="351" y="56" width="550" height="1" fill="#f0f0f0"/><rect x="375" y="57" width="526" height="680" fill="#000"/><rect x="376" y="58" width="524" height="678" fill="#fff"/><rect x="900" y="737" width="1" height="24" fill="#ffffcc"/><rect x="383" y="737" width="1" height="4" fill="#000"/><rect x="389" y="737" width="1" height="4" fill="#000"/><rect x="395" y="737" width="1" height="9" fill="#000"/><text x="395.5" y="757" font-family="Liberation Sans" font-size="11" text-anchor="middle" stroke="#000" stroke-width="0.25" shape-rendering="auto">-0.4</text><rect x="400" y="737" width="1" height="4" fill="#000"/><rect x="406" y="737" width="1" height="4" fill="#000"/><rect x="412" y="737" width="1" height="4" fill="#000"/><rect x="418" y="737" width="1" height="4" fill="#000"/><rect x="424" y="737" width="1" height="6" fill="#000"/><rect x="430" y="737" width="1" height="4" fill="#000"/><rect x="436" y="737" width="1" height="4" fill="#000"/><rect x="441" y="737" width="1" height="4" fill="#000"/><rect x="447" y="737" width="1" height="4" fill="#000"/><rect x="453" y="737" width="1" height="9" fill="#000"/><text x="453.5" y="757" font-family="Liberation Sans" font-size="11" text-anchor="middle" stroke="#000" stroke-width="0.25" shape-rendering="auto">-0.3</text><rect x="459" y="737" width="1" height="4" fill="#000"/><rect x="465" y="737" width="1" height="4" fill="#000"/><rect x="471" y="737" width="1" height="4" fill="#000"/><rect x="477" y="737" width="1" height="4" fill="#000"/><rect x="482" y="737" width="1" height="6" fill="#000"/><rect x="488" y="737" width="1" height="4" fill="#000"/><rect x="494" y="737" width="1" height="4" fill="#000"/><rect x="500" y="737" width="1" height="4" fill="#000"/><rect x="506" y="737" width="1" height="4" fill="#000"/><rect x="512" y="737" width="1" height="9" fill="#000"/><text x="512.5" y="757" font-family="Liberation Sans" font-size="11" text-anchor="middle" stroke="#000" stroke-width="0.25" shape-rendering="auto">-0.2</text><rect x="518" y="737" width="1" height="4" fill="#000"/><rect x="523" y="737" width="1" height="4" fill="#000"/><rect x="529" y="737" width="1" height="4" fill="#000"/><rect x="535" y="737" width="1" height="4" fill="#000"/><rect x="541" y="737" width="1" height="6" fill="#000"/><rect x="547" y="737" width="1" height="4" fill="#000"/><rect x="553" y="737" width="1" height="4" fill="#000"/><rect x="559" y="737" width="1" height="4" fill="#000"/><rect x="565" y="737" width="1" height="4" fill="#000"/><rect x="570" y="737" width="1" height="9" fill="#000"/><text x="570.5" y="757" font-family="Liberation Sans" font-size="11" text-anchor="middle" stroke="#000" stroke-width="0.25" shape-rendering="auto">-0.1</text><rect x="576" y="737" width="1" height="4" fill="#000"/><rect x="582" y="737" width="1" height="4" fill="#000"/><rect x="588" y="737" width="1" height="4" fill="#000"/><rect x="594" y="737" width="1" height="4" fill="#000"/><rect x="600" y="737" width="1" height="6" fill="#000"/><rect x="606" y="737" width="1" height="4" fill="#000"/><rect x="611" y="737" width="1" height="4" fill="#000"/><rect x="617" y="737" width="1" height="4" fill="#000"/><rect x="623" y="737" width="1" height="4" fill="#000"/><rect x="629" y="737" width="1" height="9" fill="#000"/><text x="629.5" y="757" font-family="Liberation Sans" font-size="11" text-anchor="middle" stroke="#000" stroke-width="0.25" shape-rendering="auto">0.0</text><rect x="635" y="737" width="1" height="4" fill="#000"/><rect x="641" y="737" width="1" height="4" fill="#000"/><rect x="647" y="737" width="1" height="4" fill="#000"/><rect x="652" y="737" width="1" height="4" fill="#000"/><rect x="658" y="737" width="1" height="6" fill="#000"/><rect x="664" y="737" width="1" height="4" fill="#000"/><rect x="670" y="737" width="1" height="4" fill="#000"/><rect x="676" y="737" width="1" height="4" fill="#000"/><rect x="682" y="737" width="1" height="4" fill="#000"/><rect x="688" y="737" width="1" height="9" fill="#000"/><text x="688.5" y="757" font-family="Liberation Sans" font-size="11" text-anchor="middle" stroke="#000" stroke-width="0.25" shape-rendering="auto">0.1</text><rect x="693" y="737" width="1" height="4" fill="#000"/><rect x="699" y="737" width="1" height="4" fill="#000"/><rect x="705" y="737" width="1" height="4" fill="#000"/><rect x="711" y="737" width="1" height="4" fill="#000"/><rect x="717" y="737" width="1" height="6" fill="#000"/><rect x="723" y="737" width="1" height="4" fill="#000"/><rect x="729" y="737" width="1" height="4" fill="#000"/><rect x="735" y="737" width="1" height="4" fill="#000"/><rect x="740" y="737" width="1" height="4" fill="#000"/><rect x="746" y="737" width="1" height="9" fill="#000"/><text x="746.5" y="757" font-family="Liberation Sans" font-size="11" text-anchor="middle" stroke="#000" stroke-width="0.25" shape-rendering="auto">0.2</text><rect x="752" y="737" width="1" height="4" fill="#000"/><rect x="758" y="737" width="1" height="4" fill="#000"/><rect x="764" y="737" width="1" height="4" fill="#000"/><rect x="770" y="737" width="1" height="4" fill="#000"/><rect x="776" y="737" width="1" height="6" fill="#000"/><rect x="781" y="737" width="1" height="4" fill="#000"/><rect x="787" y="737" width="1" height="4" fill="#000"/><rect x="793" y="737" width="1" height="4" fill="#000"/><rect x="799" y="737" width="1" height="4" fill="#000"/><rect x="805" y="737" width="1" height="9" fill="#000"/><text x="805.5" y="757" font-family="Liberation Sans" font-size="11" text-anchor="middle" stroke="#000" stroke-width="0.25" shape-rendering="auto">0.3</text><rect x="811" y="737" width="1" height="4" fill="#000"/><rect x="817" y="737" width="1" height="4" fill="#000"/><rect x="822" y="737" width="1" height="4" fill="#000"/><rect x="828" y="737" width="1" height="4" fill="#000"/><rect x="834" y="737" width="1" height="6" fill="#000"/><rect x="840" y="737" width="1" height="4" fill="#000"/><rect x="846" y="737" width="1" height="4" fill="#000"/><rect x="852" y="737" width="1" height="4" fill="#000"/><rect x="858" y="737" width="1" height="4" fill="#000"/><rect x="864" y="737" width="1" height="9" fill="#000"/><text x="864.5" y="757" font-family="Liberation Sans" font-size="11" text-anchor="middle" stroke="#000" stroke-width="0.25" shape-rendering="auto">0.4</text><rect x="869" y="737" width="1" height="4" fill="#000"/><rect x="875" y="737" width="1" height="4" fill="#000"/><rect x="881" y="737" width="1" height="4" fill="#000"/><rect x="887" y="737" width="1" height="4" fill="#000"/><rect x="893" y="737" width="1" height="6" fill="#000"/><rect x="899" y="737" width="1" height="4" fill="#000"/><rect x="372" y="731" width="3" height="1" fill="#000"/><rect x="367" y="727" width="8" height="1" fill="#000"/><g clip-path="url(#lc)"><text transform="translate(363,727.5) rotate(-90)" font-family="Liberation Sans" font-size="11" text-anchor="middle" stroke="#000" stroke-width="0.25" shape-rendering="auto">-35000</text></g><rect x="372" y="722" width="3" height="1" fill="#000"/><rect x="372" y="718" width="3" height="1" fill="#000"/><rect x="372" y="713" width="3" height="1" fill="#000"/><rect x="372" y="709" width="3" height="1" fill="#000"/><rect x="370" y="704" width="5" height="1" fill="#000"/><rect x="372" y="700" width="3" height="1" fill="#000"/><rect x="372" y="695" width="3" height="1" fill="#000"/><rect x="372" y="690" width="3" height="1" fill="#000"/><rect x="372" y="686" width="3" height="1" fill="#000"/><rect x="367" y="681" width="8" height="1" fill="#000"/><g clip-path="url(#lc)"><text transform="translate(363,681.5) rotate(-90)" font-family="Liberation Sans" font-size="11" text-anchor="middle" stroke="#000" stroke-width="0.25" shape-rendering="auto">-30000</text></g><rect x="372" y="677" width="3" height="1" fill="#000"/><rect x="372" y="672" width="3" height="1" fill="#000"/><rect x="372" y="668" width="3" height="1" fill="#000"/><rect x="372" y="663" width="3" height="1" fill="#000"/><rect x="370" y="659" width="5" height="1" fill="#000"/><rect x="372" y="654" width="3" height="1" fill="#000"/><rect x="372" y="649" width="3" height="1" fill="#000"/><rect x="372" y="645" width="3" height="1" fill="#000"/><rect x="372" y="640" width="3" height="1" fill="#000"/><rect x="367" y="636" width="8" height="1" fill="#000"/><g clip-path="url(#lc)"><text transform="translate(363,636.5) rotate(-90)" font-family="Liberation Sans" font-size="11" text-anchor="middle" stroke="#000" stroke-width="0.25" shape-rendering="auto">-25000</text></g><rect x="372" y="631" width="3" height="1" fill="#000"/><rect x="372" y="627" width="3" height="1" fill="#000"/><rect x="372" y="622" width="3" height="1" fill="#000"/><rect x="372" y="618" width="3" height="1" fill="#000"/><rect x="370" y="613" width="5" height="1" fill="#000"/><rect x="372" y="608" width="3" height="1" fill="#000"/><rect x="372" y="604" width="3" height="1" fill="#000"/><rect x="372" y="599" width="3" height="1" fill="#000"/><rect x="372" y="595" width="3" height="1" fill="#000"/><rect x="367" y="590" width="8" height="1" fill="#000"/><g clip-path="url(#lc)"><text transform="translate(363,590.5) rotate(-90)" font-family="Liberation Sans" font-size="11" text-anchor="middle" stroke="#000" stroke-width="0.25" shape-rendering="auto">-20000</text></g><rect x="372" y="586" width="3" height="1" fill="#000"/><rect x="372" y="581" width="3" height="1" fill="#000"/><rect x="372" y="577" width="3" height="1" fill="#000"/><rect x="372" y="572" width="3" height="1" fill="#000"/><rect x="370" y="568" width="5" height="1" fill="#000"/><rect x="372" y="563" width="3" height="1" fill="#000"/><rect x="372" y="558" width="3" height="1" fill="#000"/><rect x="372" y="554" width="3" height="1" fill="#000"/><rect x="372" y="549" width="3" height="1" fill="#000"/><rect x="367" y="545" width="8" height="1" fill="#000"/><g clip-path="url(#lc)"><text transform="translate(363,545.5) rotate(-90)" font-family="Liberation Sans" font-size="11" text-anchor="middle" stroke="#000" stroke-width="0.25" shape-rendering="auto">-15000</text></g><rect x="372" y="540" width="3" height="1" fill="#000"/><rect x="372" y="536" width="3" height="1" fill="#000"/><rect x="372" y="531" width="3" height="1" fill="#000"/><rect x="372" y="527" width="3" height="1" fill="#000"/><rect x="370" y="522" width="5" height="1" fill="#000"/><rect x="372" y="518" width="3" height="1" fill="#000"/><rect x="372" y="513" width="3" height="1" fill="#000"/><rect x="372" y="508" width="3" height="1" fill="#000"/><rect x="372" y="504" width="3" height="1" fill="#000"/><rect x="367" y="499" width="8" height="1" fill="#000"/><g clip-path="url(#lc)"><text transform="translate(363,499.5) rotate(-90)" font-family="Liberation Sans" font-size="11" text-anchor="middle" stroke="#000" stroke-width="0.25" shape-rendering="auto">-10000</text></g><rect x="372" y="495" width="3" height="1" fill="#000"/><rect x="372" y="490" width="3" height="1" fill="#000"/><rect x="372" y="486" width="3" height="1" fill="#000"/><rect x="372" y="481" width="3" height="1" fill="#000"/><rect x="370" y="477" width="5" height="1" fill="#000"/><rect x="372" y="472" width="3" height="1" fill="#000"/><rect x="372" y="467" width="3" height="1" fill="#000"/><rect x="372" y="463" width="3" height="1" fill="#000"/><rect x="372" y="458" width="3" height="1" fill="#000"/><rect x="367" y="454" width="8" height="1" fill="#000"/><g clip-path="url(#lc)"><text transform="translate(363,454.5) rotate(-90)" font-family="Liberation Sans" font-size="11" text-anchor="middle" stroke="#000" stroke-width="0.25" shape-rendering="auto">-5000</text></g><rect x="372" y="449" width="3" height="1" fill="#000"/><rect x="372" y="445" width="3" height="1" fill="#000"/><rect x="372" y="440" width="3" height="1" fill="#000"/><rect x="372" y="436" width="3" height="1" fill="#000"/><rect x="370" y="431" width="5" height="1" fill="#000"/><rect x="372" y="426" width="3" height="1" fill="#000"/><rect x="372" y="422" width="3" height="1" fill="#000"/><rect x="372" y="417" width="3" height="1" fill="#000"/><rect x="372" y="413" width="3" height="1" fill="#000"/><rect x="367" y="408" width="8" height="1" fill="#000"/><g clip-path="url(#lc)"><text transform="translate(363,408.5) rotate(-90)" font-family="Liberation Sans" font-size="11" text-anchor="middle" stroke="#000" stroke-width="0.25" shape-rendering="auto">0</text></g><rect x="372" y="404" width="3" height="1" fill="#000"/><rect x="372" y="399" width="3" height="1" fill="#000"/><rect x="372" y="395" width="3" height="1" fill="#000"/><rect x="372" y="390" width="3" height="1" fill="#000"/><rect x="370" y="386" width="5" height="1" fill="#000"/><rect x="372" y="381" width="3" height="1" fill="#000"/><rect x="372" y="376" width="3" height="1" fill="#000"/><rect x="372" y="372" width="3" height="1" fill="#000"/><rect x="372" y="367" width="3" height="1" fill="#000"/><rect x="367" y="363" width="8" height="1" fill="#000"/><g clip-path="url(#lc)"><text transform="translate(363,363.5) rotate(-90)" font-family="Liberation Sans" font-size="11" text-anchor="middle" stroke="#000" stroke-width="0.25" shape-rendering="auto">5000</text></g><rect x="372" y="358" width="3" height="1" fill="#000"/><rect x="372" y="354" width="3" height="1" fill="#000"/><rect x="372" y="349" width="3" height="1" fill="#000"/><rect x="372" y="345" width="3" height="1" fill="#000"/><rect x="370" y="340" width="5" height="1" fill="#000"/><rect x="372" y="336" width="3" height="1" fill="#000"/><rect x="372" y="331" width="3" height="1" fill="#000"/><rect x="372" y="326" width="3" height="1" fill="#000"/><rect x="372" y="322" width="3" height="1" fill="#000"/><rect x="367" y="317" width="8" height="1" fill="#000"/><g clip-path="url(#lc)"><text transform="translate(363,317.5) rotate(-90)" font-family="Liberation Sans" font-size="11" text-anchor="middle" stroke="#000" stroke-width="0.25" shape-rendering="auto">10000</text></g><rect x="372" y="313" width="3" height="1" fill="#000"/><rect x="372" y="308" width="3" height="1" fill="#000"/><rect x="372" y="304" width="3" height="1" fill="#000"/><rect x="372" y="299" width="3" height="1" fill="#000"/><rect x="370" y="295" width="5" height="1" fill="#000"/><rect x="372" y="290" width="3" height="1" fill="#000"/><rect x="372" y="285" width="3" height="1" fill="#000"/><rect x="372" y="281" width="3" height="1" fill="#000"/><rect x="372" y="276" width="3" height="1" fill="#000"/><rect x="367" y="272" width="8" height="1" fill="#000"/><g clip-path="url(#lc)"><text transform="translate(363,272.5) rotate(-90)" font-family="Liberation Sans" font-size="11" text-anchor="middle" stroke="#000" stroke-width="0.25" shape-rendering="auto">15000</text></g><rect x="372" y="267" width="3" height="1" fill="#000"/><rect x="372" y="263" width="3" height="1" fill="#000"/><rect x="372" y="258" width="3" height="1" fill="#000"/><rect x="372" y="254" width="3" height="1" fill="#000"/><rect x="370" y="249" width="5" height="1" fill="#000"/><rect x="372" y="244" width="3" height="1" fill="#000"/><rect x="372" y="240" width="3" height="1" fill="#000"/><rect x="372" y="235" width="3" height="1" fill="#000"/><rect x="372" y="231" width="3" height="1" fill="#000"/><rect x="367" y="226" width="8" height="1" fill="#000"/><g clip-path="url(#lc)"><text transform="translate(363,226.5) rotate(-90)" font-family="Liberation Sans" font-size="11" text-anchor="middle" stroke="#000" stroke-width="0.25" shape-rendering="auto">20000</text></g><rect x="372" y="222" width="3" height="1" fill="#000"/><rect x="372" y="217" width="3" height="1" fill="#000"/><rect x="372" y="213" width="3" height="1" fill="#000"/><rect x="372" y="208" width="3" height="1" fill="#000"/><rect x="370" y="204" width="5" height="1" fill="#000"/><rect x="372" y="199" width="3" height="1" fill="#000"/><rect x="372" y="194" width="3" height="1" fill="#000"/><rect x="372" y="190" width="3" height="1" fill="#000"/><rect x="372" y="185" width="3" height="1" fill="#000"/><rect x="367" y="181" width="8" height="1" fill="#000"/><g clip-path="url(#lc)"><text transform="translate(363,181.5) rotate(-90)" font-family="Liberation Sans" font-size="11" text-anchor="middle" stroke="#000" stroke-width="0.25" shape-rendering="auto">25000</text></g><rect x="372" y="176" width="3" height="1" fill="#000"/><rect x="372" y="172" width="3" height="1" fill="#000"/><rect x="372" y="167" width="3" height="1" fill="#000"/><rect x="372" y="163" width="3" height="1" fill="#000"/><rect x="370" y="158" width="5" height="1" fill="#000"/><rect x="372" y="154" width="3" height="1" fill="#000"/><rect x="372" y="149" width="3" height="1" fill="#000"/><rect x="372" y="144" width="3" height="1" fill="#000"/><rect x="372" y="140" width="3" height="1" fill="#000"/><rect x="367" y="135" width="8" height="1" fill="#000"/><g clip-path="url(#lc)"><text transform="translate(363,135.5) rotate(-90)" font-family="Liberation Sans" font-size="11" text-anchor="middle" stroke="#000" stroke-width="0.25" shape-rendering="auto">30000</text></g><rect x="372" y="131" width="3" height="1" fill="#000"/><rect x="372" y="126" width="3" height="1" fill="#000"/><rect x="372" y="122" width="3" height="1" fill="#000"/><rect x="372" y="117" width="3" height="1" fill="#000"/><rect x="370" y="113" width="5" height="1" fill="#000"/><rect x="372" y="108" width="3" height="1" fill="#000"/><rect x="372" y="103" width="3" height="1" fill="#000"/><rect x="372" y="99" width="3" height="1" fill="#000"/><rect x="372" y="94" width="3" height="1" fill="#000"/><rect x="367" y="90" width="8" height="1" fill="#000"/><g clip-path="url(#lc)"><text transform="translate(363,90.5) rotate(-90)" font-family="Liberation Sans" font-size="11" text-anchor="middle" stroke="#000" stroke-width="0.25" shape-rendering="auto">35000</text></g><rect x="372" y="85" width="3" height="1" fill="#000"/><rect x="372" y="81" width="3" height="1" fill="#000"/><rect x="372" y="76" width="3" height="1" fill="#000"/><rect x="372" y="72" width="3" height="1" fill="#000"/><rect x="370" y="67" width="5" height="1" fill="#000"/><rect x="372" y="62" width="3" height="1" fill="#000"/><rect x="372" y="58" width="3" height="1" fill="#000"/><path d="M360.5 59.5 L366.5 65.5 L354.5 65.5 Z" fill="none" stroke="#000" shape-rendering="auto"/><path d="M354.5 729.5 L366.5 729.5 L360.5 735.5 Z" fill="none" stroke="#000" shape-rendering="auto"/><path d="M383.5 746.5 L383.5 758.5 L377.5 752.5 Z" fill="none" stroke="#000" shape-rendering="auto"/><path d="M893.5 746.5 L893.5 758.5 L899.5 752.5 Z" fill="none" stroke="#000" shape-rendering="auto"/><text x="607" y="126" font-family="Liberation Sans" font-size="19" stroke="#000" stroke-width="0.5" shape-rendering="auto">並進</text><text x="654" y="126" font-family="Liberation Sans" font-size="17" stroke="#000" stroke-width="0.2" shape-rendering="auto">x</text><text x="663" y="126" font-family="Liberation Sans" font-size="19" stroke="#000" stroke-width="0.3" shape-rendering="auto">l</text><rect x="435" y="408" width="405" height="1" fill="#000"/><path d="M841 408.5 L833.5 405 L833.5 412 Z" fill="#000" shape-rendering="auto"/><rect x="629" y="137" width="1" height="522" fill="#000"/><path d="M629.5 134.5 L626 142 L633 142 Z" fill="#000" shape-rendering="auto"/><rect x="614" y="408" width="1" height="227" fill="#ff0000"/><rect x="644" y="386" width="1" height="23" fill="#ff0000"/><line x1="631" y1="181.5" x2="776" y2="181.5" stroke="#000" stroke-dasharray="3,3"/><line x1="482" y1="635.5" x2="629" y2="635.5" stroke="#000" stroke-dasharray="3,3"/><path d="M676 341.5 L733.5 341.5 L733.5 251" fill="none" stroke="#000"/><path d="M676.3 341.5 L733.8 251.5" fill="none" stroke="#000" stroke-width="1.1"/><polyline points="482.8,635.5 776.8,181.2" fill="none" stroke="#0000ff" stroke-width="2.2" stroke-linecap="butt" shape-rendering="crispEdges"/><rect x="481" y="407" width="2" height="229" fill="#000"/><rect x="775" y="181" width="2" height="228" fill="#000"/><rect x="453" y="407" width="29" height="2" fill="#000"/><rect x="776" y="407" width="30" height="2" fill="#000"/><text x="633" y="149" font-family="Liberation Sans" font-size="10" shape-rendering="auto">F (kN)</text><text x="604" y="185" font-family="Liberation Sans" font-size="10" shape-rendering="auto">F</text><text x="610" y="185" font-family="Liberation Sans" font-size="10" shape-rendering="auto">fail</text><text x="633" y="638" font-family="Liberation Sans" font-size="10" shape-rendering="auto">−F</text><text x="646" y="638" font-family="Liberation Sans" font-size="10" shape-rendering="auto">fail</text><text x="737" y="299" font-family="Liberation Sans" font-size="10" shape-rendering="auto">K1</text><text x="466" y="401" font-family="Liberation Sans" font-size="10" shape-rendering="auto">−</text><text x="475" y="401" font-family="Liberation Sans" font-size="10" font-style="italic" shape-rendering="auto">δ</text><text x="483" y="401" font-family="Liberation Sans" font-size="10" shape-rendering="auto">fail</text><text x="783" y="401" font-family="Liberation Sans" font-size="10" font-style="italic" shape-rendering="auto">δ</text><text x="791" y="401" font-family="Liberation Sans" font-size="10" shape-rendering="auto">fail</text><text x="816" y="420" font-family="Liberation Sans" font-size="10" font-style="italic" shape-rendering="auto">δ</text><text x="827" y="420" font-family="Liberation Sans" font-size="10" shape-rendering="auto">(mm)</text><text x="705" y="732" font-family="Liberation Sans" font-size="11" shape-rendering="auto">(</text><text x="713" y="728" font-family="Liberation Sans" font-size="10" shape-rendering="auto">δ</text><text x="719" y="732" font-family="Liberation Sans" font-size="11" shape-rendering="auto">fail</text><text x="733" y="732" font-family="Liberation Sans" font-size="11" shape-rendering="auto">,</text><text x="735" y="728" font-family="Liberation Sans" font-size="10" shape-rendering="auto">F</text><text x="741" y="732" font-family="Liberation Sans" font-size="11" shape-rendering="auto">fail</text><text x="757" y="732" font-family="Liberation Sans" font-size="11" shape-rendering="auto">)</text><text x="764" y="732" font-family="Liberation Sans" font-size="11" shape-rendering="auto">=</text><text x="776" y="732" font-family="Liberation Sans" font-size="11" shape-rendering="auto">(</text><text x="781" y="732" font-family="Liberation Sans" font-size="11" shape-rendering="auto">250.00000,</text><text x="841" y="732" font-family="Liberation Sans" font-size="11" shape-rendering="auto">25000.000)</text><rect x="437" y="380" width="78" height="284" fill="#ffff00" style="mix-blend-mode:multiply"/><rect x="759" y="163" width="56" height="290" fill="#ffff00" style="mix-blend-mode:multiply"/></svg>
</body></html>
